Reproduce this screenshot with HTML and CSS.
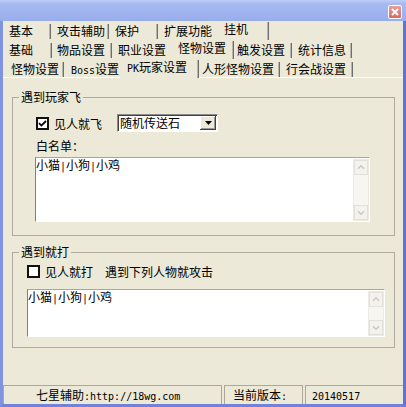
FILE: index.html
```html
<!DOCTYPE html>
<html lang="zh-CN">
<head>
    <meta charset="UTF-8">
    <meta name="viewport" content="width=device-width, initial-scale=1.0">
    <title>挂机设置</title>
    <link rel="stylesheet" href="styles.css">
</head>
<body>
    <div class="titlebar">
        <div class="close">
            <svg width="12" height="12" viewBox="0 0 12 12"><path d="M3 3 L9 9 M9 3 L3 9" stroke="#fff" stroke-width="2"/></svg>
        </div>
    </div>
    <div class="frame">
        <div class="tabrow r1">
            <div class="tab">基本</div>
            <div class="tab">攻击辅助</div>
            <div class="tab">保护</div>
            <div class="tab">扩展功能</div>
            <div class="tab active">挂机</div>
        </div>
        <div class="tabrow r2">
            <div class="tab">基础</div>
            <div class="tab">物品设置</div>
            <div class="tab">职业设置</div>
            <div class="tab active">怪物设置</div>
            <div class="tab">触发设置</div>
            <div class="tab">统计信息</div>
        </div>
        <div class="tabrow r3">
            <div class="tab">怪物设置</div>
            <div class="tab"><span class="en">Boss</span>设置</div>
            <div class="tab active"><span class="en">PK</span>玩家设置</div>
            <div class="tab">人形怪物设置</div>
            <div class="tab">行会战设置</div>
        </div>

        <div class="panel">
            <fieldset class="group g1">
                <legend>遇到玩家飞</legend>
                <div class="opt">
                    <span class="check"><svg width="9" height="9" viewBox="0 0 9 9"><path d="M1 4.2 L3.4 6.6 L8 2" fill="none" stroke="#000" stroke-width="1.8"/></svg></span>
                    <span>见人就飞</span>
                    <div class="combo">
                        <span class="combo-text">随机传送石</span>
                        <span class="combo-btn"><svg width="7" height="4" viewBox="0 0 7 4"><polygon points="0,0 7,0 3.5,4" fill="#000"/></svg></span>
                    </div>
                </div>
                <div class="caption">白名单：</div>
                <div class="memo m1">
                    <div class="memo-text">小猫<span class="en">|</span>小狗<span class="en">|</span>小鸡</div>
                    <div class="vscroll">
                        <span class="sb-btn"><svg width="14" height="13" viewBox="0 0 14 13"><polyline points="3.5,8 7,4.5 10.5,8" fill="none" stroke="#c8c7bf" stroke-width="1.6"/></svg></span>
                        <span class="sb-btn"><svg width="14" height="13" viewBox="0 0 14 13"><polyline points="3.5,5 7,8.5 10.5,5" fill="none" stroke="#c8c7bf" stroke-width="1.6"/></svg></span>
                    </div>
                </div>
            </fieldset>

            <fieldset class="group g2">
                <legend>遇到就打</legend>
                <div class="opt">
                    <span class="check"></span>
                    <span>见人就打</span>
                    <span class="hint">遇到下列人物就攻击</span>
                </div>
                <div class="memo m2">
                    <div class="memo-text">小猫<span class="en">|</span>小狗<span class="en">|</span>小鸡</div>
                    <div class="vscroll">
                        <span class="sb-btn"><svg width="14" height="13" viewBox="0 0 14 13"><polyline points="3.5,8 7,4.5 10.5,8" fill="none" stroke="#c8c7bf" stroke-width="1.6"/></svg></span>
                        <span class="sb-btn"><svg width="14" height="13" viewBox="0 0 14 13"><polyline points="3.5,5 7,8.5 10.5,5" fill="none" stroke="#c8c7bf" stroke-width="1.6"/></svg></span>
                    </div>
                </div>
            </fieldset>
        </div>

        <div class="statusbar">
            <div class="pane p1">七星辅助<span class="en">:http://18wg.com</span></div>
            <div class="pane p2">当前版本<span class="en">:</span></div>
            <div class="pane p3"><span class="en">20140517</span></div>
        </div>
    </div>
</body>
</html>
```

FILE: styles.css
```css
body {
    margin: 0;
    width: 406px;
    height: 407px;
    overflow: hidden;
    font-family: "Noto Sans CJK SC", "Liberation Sans", sans-serif;
    font-size: 12px;
    color: #000;
    background: #ece9d8;
}
.en {
    font-family: "DejaVu Sans Mono", monospace;
    font-size: 10px;
}
.titlebar {
    height: 21px;
    background: linear-gradient(#bccdf6 0, #a6baf1 4px, #98adec 100%);
    display: flex;
    justify-content: flex-end;
    align-items: flex-start;
    padding: 5px 4px 0 0;
    box-sizing: border-box;
}
.close {
    width: 14px;
    height: 14px;
    box-sizing: border-box;
    border: 1px solid #fff;
    border-radius: 2px;
    background: linear-gradient(#eb9c98, #d86a66);
    display: flex;
    align-items: center;
    justify-content: center;
}
.frame {
    height: 386px;
    box-sizing: border-box;
    border-left: 3px solid #8093e0;
    border-right: 3px solid #5f74d8;
    border-bottom: 3px solid #7083dc;
    display: flex;
    flex-direction: column;
}

/* tab rows */
.tabrow {
    display: flex;
    height: 19px;
    flex: none;
}
.tab {
    flex: none;
    height: 15px;
    margin-top: 3px;
    line-height: 14px;
    padding-left: 6px;
    box-sizing: border-box;
    border-right: 1px solid #6f6f6f;
    box-shadow: inset -1px 0 0 #b8b6aa;
    white-space: nowrap;
}
.tab.active {
    height: 18px;
    margin-top: 1px;
    margin-left: -2px;
    margin-right: -2px;
    padding-left: 8px;
    position: relative;
    z-index: 1;
    background: #ece9d8;
}
.r3 {
    height: 18px;
    border-bottom: 1px solid #fff;
}
.r1 .tab:nth-child(1) { width: 48px; }
.r1 .tab:nth-child(2) { width: 58px; }
.r1 .tab:nth-child(3) { width: 49px; }
.r1 .tab:nth-child(4) { width: 60px; }
.r1 .tab:nth-child(5) { width: 53px; }
.r2 .tab:nth-child(1) { width: 49px; }
.r2 .tab:nth-child(2) { width: 60px; padding-left: 5px; }
.r2 .tab:nth-child(3) { width: 60px; }
.r2 .tab:nth-child(4) { width: 64px; }
.r2 .tab:nth-child(5) { width: 60px; padding-left: 5px; }
.r2 .tab:nth-child(6) { width: 60px; }
.r3 .tab:nth-child(1) { width: 61px; padding-left: 8px; }
.r3 .tab:nth-child(2) { width: 58px; padding-left: 7px; }
.r3 .tab:nth-child(3) { width: 79px; padding-left: 7px; }
.r3 .tab:nth-child(4) { width: 83px; padding-left: 5px; }
.r3 .tab:nth-child(5) { width: 73px; }

/* group boxes */
.panel {
    flex: 1;
}
.group {
    margin: 0 8px 0 9px;
    padding: 0;
    border: 1px solid #aeab9c;
    min-width: 0;
}
.group legend {
    margin-left: 6px;
    padding: 0 2px;
    line-height: 16px;
}
.g1 {
    margin-top: 11px;
    padding-bottom: 13px;
}
.g2 {
    margin-top: 8px;
    padding-bottom: 10px;
}
.opt {
    display: flex;
    align-items: center;
}
.g1 .opt {
    height: 18px;
    margin-top: 9px;
    padding-left: 23px;
}
.g2 .opt {
    height: 14px;
    margin-top: 4px;
    padding-left: 14px;
}
.check {
    width: 13px;
    height: 13px;
    box-sizing: border-box;
    border: 2px solid #111;
    background: #fff;
    margin-right: 5px;
    display: flex;
    align-items: center;
    justify-content: center;
}
.hint {
    margin-left: 12px;
}
.combo {
    width: 101px;
    height: 18px;
    margin-left: 15px;
    box-sizing: border-box;
    background: #fff;
    border-top: 1px solid #8c8c8c;
    border-left: 1px solid #8c8c8c;
    border-right: 1px solid #fff;
    border-bottom: 1px solid #fff;
    box-shadow: inset 1px 1px 0 #404040;
    display: flex;
    align-items: center;
    padding: 1px 1px 1px 2px;
}
.combo-text {
    flex: 1;
    line-height: 14px;
}
.combo-btn {
    width: 16px;
    height: 14px;
    background: #ece9d8;
    box-shadow: inset -1px -1px 0 #404040, inset 1px 1px 0 #fff, inset -2px -2px 0 #9a9a9a;
    display: flex;
    align-items: center;
    justify-content: center;
}
.caption {
    margin-top: 7px;
    padding-left: 23px;
    line-height: 14px;
}
.memo {
    display: flex;
    box-sizing: border-box;
    background: #fff;
    border-top: 1px solid #a5a5a5;
    border-left: 1px solid #808080;
    border-right: 1px solid #fff;
    border-bottom: 1px solid #fff;
}
.m1 {
    width: 335px;
    height: 65px;
    margin: 4px 0 0 22px;
}
.m2 {
    width: 358px;
    height: 48px;
    margin: 11px 0 0 14px;
}
.memo-text {
    flex: 1;
    line-height: 14px;
}
.vscroll {
    width: 16px;
    margin-top: 1px;
    background: #f7f6f1;
    border: 1px solid #ebeae3;
    box-sizing: border-box;
    display: flex;
    flex-direction: column;
    justify-content: space-between;
}
.sb-btn {
    height: 15px;
    background: #f3f2ec;
    border: 1px solid #e2e1d8;
    box-sizing: border-box;
    display: flex;
    align-items: center;
    justify-content: center;
}

/* status bar */
.statusbar {
    height: 19px;
    flex: none;
    display: flex;
    gap: 2px;
}
.pane {
    box-sizing: border-box;
    border-top: 1px solid #aca899;
    border-left: 1px solid #aca899;
    border-right: 1px solid #aca899;
    line-height: 18px;
    white-space: nowrap;
}
.p1 {
    width: 219px;
    padding-left: 32px;
}
.p2 {
    width: 79px;
    padding-left: 8px;
}
.p3 {
    flex: 1;
    padding-left: 6px;
    border-right: none;
}
```
